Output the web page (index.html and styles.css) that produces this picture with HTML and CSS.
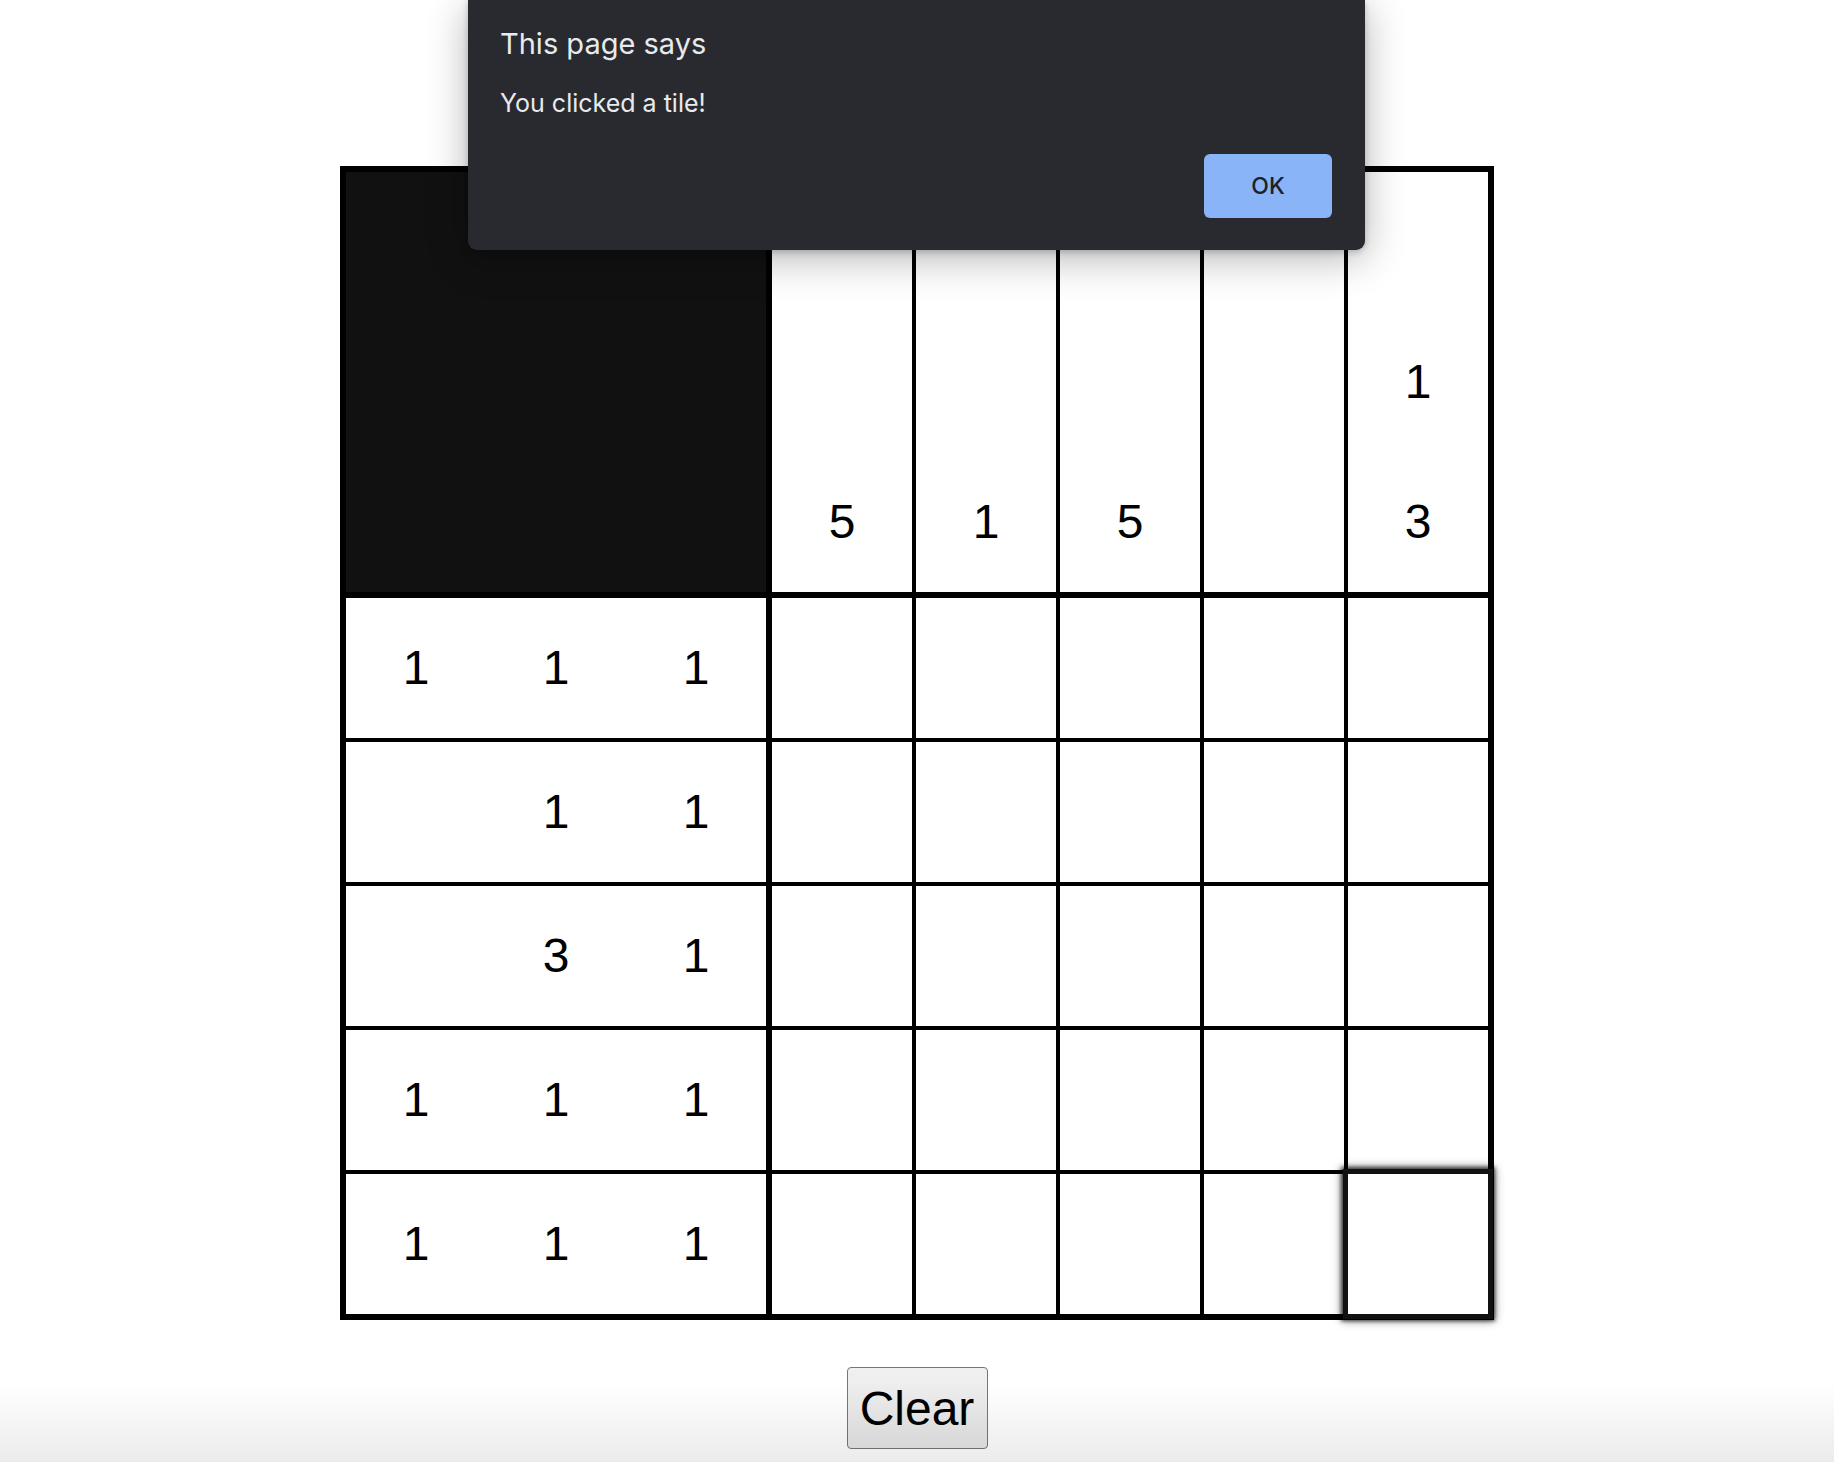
FILE: index.html
```html
<!DOCTYPE html>
<html lang="en">
<head>
<meta charset="utf-8">
<title>Nonogram</title>
<link rel="stylesheet" href="styles.css">
</head>
<body>
<main class="page">
  <div class="board">
    <div class="corner"></div>
    <div class="col-clue"><span></span><span></span><span>5</span></div>
    <div class="col-clue"><span></span><span></span><span>1</span></div>
    <div class="col-clue"><span></span><span></span><span>5</span></div>
    <div class="col-clue"><span></span><span></span><span></span></div>
    <div class="col-clue"><span></span><span>1</span><span>3</span></div>

    <div class="row-clue"><span>1</span><span>1</span><span>1</span></div>
    <div class="tile"></div><div class="tile"></div><div class="tile"></div><div class="tile"></div><div class="tile"></div>

    <div class="row-clue"><span></span><span>1</span><span>1</span></div>
    <div class="tile"></div><div class="tile"></div><div class="tile"></div><div class="tile"></div><div class="tile"></div>

    <div class="row-clue"><span></span><span>3</span><span>1</span></div>
    <div class="tile"></div><div class="tile"></div><div class="tile"></div><div class="tile"></div><div class="tile"></div>

    <div class="row-clue"><span>1</span><span>1</span><span>1</span></div>
    <div class="tile"></div><div class="tile"></div><div class="tile"></div><div class="tile"></div><div class="tile"></div>

    <div class="row-clue"><span>1</span><span>1</span><span>1</span></div>
    <div class="tile"></div><div class="tile"></div><div class="tile"></div><div class="tile"></div><div class="tile tile-hover"></div>
  </div>
  <button class="clear-btn" type="button">Clear</button>
</main>

<div class="dialog" role="alertdialog">
  <div class="dialog-title">This page says</div>
  <div class="dialog-msg">You clicked a tile!</div>
  <div class="dialog-actions"><button class="ok-btn" type="button">OK</button></div>
</div>

<div class="window-fade"></div>
</body>
</html>
```

FILE: styles.css
```css
html, body {
  margin: 0;
  padding: 0;
  background: #ffffff;
}

body {
  width: 1834px;
  height: 1462px;
  overflow: hidden;
  position: relative;
  font-family: "Liberation Sans", Arial, sans-serif;
}

.page {
  display: flex;
  flex-direction: column;
  align-items: center;
  padding-top: 166px;
}

.board {
  display: grid;
  grid-template-columns: 422px repeat(5, 140px);
  grid-template-rows: 422px repeat(5, 140px);
  gap: 4px;
  background: #000;
  border: 6px solid #000;
}

.corner {
  background: #111111;
  margin: 0 2px 2px 0;
}

.col-clue {
  background: #fff;
  margin-bottom: 2px;
  display: flex;
  flex-direction: column;
}

.row-clue {
  background: #fff;
  margin-right: 2px;
  display: flex;
}

.col-clue span,
.row-clue span {
  width: 140px;
  height: 140px;
  display: flex;
  align-items: center;
  justify-content: center;
  font-size: 48px;
  color: #000;
  line-height: 1;
}

.tile {
  background: #fff;
}

.tile-hover {
  position: relative;
  z-index: 1;
  box-shadow: 0 0 0 5px #111, 0 0 4px 7px rgba(0, 0, 0, 0.7), 0 0 10px 6px rgba(0, 0, 0, 0.45);
}

.clear-btn {
  margin-top: 47px;
  width: 141px;
  height: 82px;
  padding: 0;
  font-family: "Liberation Sans", Arial, sans-serif;
  font-size: 48px;
  color: #000;
  background: linear-gradient(#f0f0f0, #e6e6e6);
  border: 1px solid #767676;
  border-radius: 4px;
}

.dialog {
  position: absolute;
  top: 0;
  left: 468px;
  width: 897px;
  box-sizing: border-box;
  padding: 26px 33px 32px 32px;
  background: #292a2f;
  border-radius: 0 0 9px 9px;
  box-shadow: 0 8px 40px rgba(0, 0, 0, 0.3), 0 2px 6px rgba(0, 0, 0, 0.2);
  font-family: Inter, Roboto, "Noto Sans", sans-serif;
  color: #e8eaed;
}

.dialog-title {
  font-size: 29px;
  line-height: 36px;
}

.dialog-msg {
  margin-top: 26px;
  font-size: 25px;
  line-height: 30px;
}

.dialog-actions {
  margin-top: 36px;
  display: flex;
  justify-content: flex-end;
}

.ok-btn {
  width: 128px;
  height: 64px;
  border: none;
  border-radius: 6px;
  background: #8ab4f8;
  color: #202124;
  font-family: Inter, Roboto, "Noto Sans", sans-serif;
  font-size: 23px;
  font-weight: 500;
}

.window-fade {
  position: absolute;
  left: 0;
  right: 0;
  bottom: 0;
  height: 80px;
  pointer-events: none;
  background: linear-gradient(rgba(0, 0, 0, 0), rgba(0, 0, 0, 0.08));
}
```
